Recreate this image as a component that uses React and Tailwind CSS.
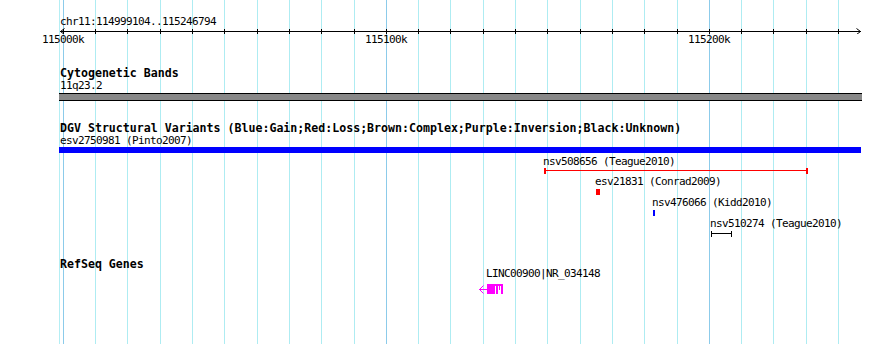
import React from 'react'

const GRID = [63, 95, 127, 160, 192, 224, 257, 289, 321, 354, 386, 418, 450, 483, 515, 547, 580, 612, 644, 677, 709, 741, 773, 806, 838]
const MAJOR = [63, 386, 709]

const RULER_LABELS = [
  { x: 63, text: '115000k' },
  { x: 386, text: '115100k' },
  { x: 709, text: '115200k' },
]

const VARIANTS = [
  { x: 543, top: 3, gap: 0, label: 'nsv508656 (Teague2010)', kind: 'span', start: 544, end: 808, color: '#ff0000', cap: 2 },
  { x: 595, top: 23, gap: 1, label: 'esv21831 (Conrad2009)', kind: 'box', start: 596, end: 600, color: '#ff0000' },
  { x: 652, top: 44, gap: 1, label: 'nsv476066 (Kidd2010)', kind: 'box', start: 653, end: 655, color: '#0000ff' },
  { x: 710, top: 65, gap: 1, label: 'nsv510274 (Teague2010)', kind: 'span', start: 711, end: 732, color: '#000000', cap: 1 },
]

const small = 'text-[11px] leading-[12px] tracking-[-0.62px] whitespace-nowrap'

function Grid() {
  return (
    <svg className="absolute inset-0" width="890" height="344">
      <rect x="59" y="0" width="1" height="344" fill="#b4eef4" />
      {GRID.map(x => (
        <rect key={x} x={x} y="0" width="1" height="344" fill={MAJOR.includes(x) ? '#8ccbea' : '#aeecf2'} />
      ))}
    </svg>
  )
}

function Ruler() {
  return (
    <div>
      <div className={`pt-[16px] pl-[60px] ${small}`}>chr11:114999104..115246794</div>
      <svg className="block" width="890" height="6">
        <rect x="60" y="3" width="801" height="1" fill="#000" />
        {GRID.map(x => (
          <rect key={x} x={x} y="1" width="1" height="5" fill="#000" />
        ))}
        <path d="M64.5 0.5 L60.5 3.5 L64.5 6.5" fill="none" stroke="#000" strokeWidth="1" />
        <path d="M856.5 0.5 L860.5 3.5 L856.5 6.5" fill="none" stroke="#000" strokeWidth="1" />
      </svg>
      <div className={`relative h-[12px] ${small}`}>
        {RULER_LABELS.map(l => (
          <span key={l.text} className="absolute top-0" style={{ left: l.x - 21 }}>
            {l.text}
          </span>
        ))}
      </div>
    </div>
  )
}

function TrackTitle({ children, className }) {
  return (
    <div className={`pl-[60px] text-[11.6px] leading-[11px] font-bold whitespace-nowrap ${className}`}>
      {children}
    </div>
  )
}

function Glyph({ f }) {
  const w = f.end - f.start
  if (f.kind === 'box') {
    return <div className="h-[6px]" style={{ width: w, marginLeft: f.start - f.x, backgroundColor: f.color }} />
  }
  return (
    <svg className="block" width={w} height="6" style={{ marginLeft: f.start - f.x }}>
      <rect x="0" y="0" width={f.cap} height="6" fill={f.color} />
      <rect x={w - f.cap} y="0" width={f.cap} height="6" fill={f.color} />
      <rect x="0" y="2" width={w} height="1" fill={f.color} />
    </svg>
  )
}

function GeneGlyph() {
  return (
    <svg className="absolute" style={{ left: 479, top: 14 }} width="26" height="11">
      <path d="M4.5 1.5 L0.5 5.5 L4.5 9.5" fill="none" stroke="#ff00ff" strokeWidth="1" />
      <rect x="0" y="5" width="8" height="1" fill="#ff00ff" />
      <rect x="8" y="0" width="8" height="10" fill="#ff00ff" />
      <rect x="16" y="0" width="8" height="2" fill="#ff00ff" />
      <rect x="17" y="0" width="2" height="10" fill="#ff00ff" />
      <rect x="20" y="0" width="1" height="6" fill="#ff00ff" />
      <rect x="22" y="0" width="2" height="10" fill="#ff00ff" />
    </svg>
  )
}

export default function App() {
  return (
    <div className="relative w-[890px] h-[344px] overflow-hidden bg-white text-black font-['DejaVu_Sans_Mono',monospace]">
      <Grid />
      <div className="relative">
        <Ruler />

        {/* Cytogenetic bands */}
        <TrackTitle className="mt-[22px]">Cytogenetic Bands</TrackTitle>
        <div className={`mt-[1px] pl-[60px] ${small}`}>11q23.2</div>
        <div className="mt-[1px] ml-[59px] w-[803px] h-[8px] border-y border-black bg-[#888888]" />

        {/* DGV structural variants */}
        <TrackTitle className="mt-[22px]">
          DGV Structural Variants (Blue:Gain;Red:Loss;Brown:Complex;Purple:Inversion;Black:Unknown)
        </TrackTitle>
        <div className={`mt-[1px] pl-[60px] ${small}`}>esv2750981 (Pinto2007)</div>
        <div className="ml-[59px] w-[802px] h-[6px] bg-[#0000ff]" />
        <div className="relative h-[84px]">
          {VARIANTS.map(f => (
            <div key={f.label} className="absolute" style={{ left: f.x, top: f.top }}>
              <div className={small}>{f.label}</div>
              <div style={{ marginTop: f.gap }}>
                <Glyph f={f} />
              </div>
            </div>
          ))}
        </div>

        {/* RefSeq genes */}
        <TrackTitle className="mt-[22px]">RefSeq Genes</TrackTitle>
        <div className="relative h-[30px]">
          <div className={`absolute left-[486px] top-[-2px] ${small}`}>LINC00900|NR_034148</div>
          <GeneGlyph />
        </div>
      </div>
    </div>
  )
}
